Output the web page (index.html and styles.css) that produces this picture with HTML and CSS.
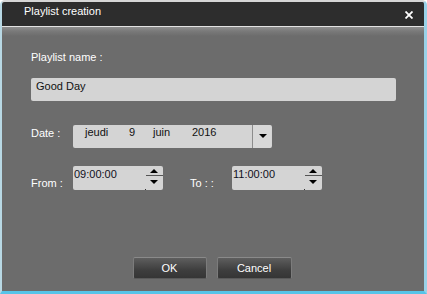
FILE: index.html
```html
<!DOCTYPE html>
<html>
<head>
<meta charset="utf-8">
<link rel="stylesheet" href="styles.css">
</head>
<body>
<div class="window">
  <div class="titlebar">
    <span class="title">Playlist creation</span>
    <svg class="close" width="8" height="8" viewBox="0 0 8 8"><path d="M0.5 0.5 L7.5 7.5 M7.5 0.5 L0.5 7.5" stroke="#fff" stroke-width="1.8" fill="none"/></svg>
  </div>
  <div class="content">
    <div class="label">Playlist name :</div>
    <div class="textbox">Good Day</div>
    <div class="row date-row">
      <div class="rowlabel">Date :</div>
      <div class="datebox">
        <div class="datetext"><span class="d-day">jeudi</span><span class="d-num">9</span><span class="d-month">juin</span><span>2016</span></div>
        <div class="dropbtn"><svg width="8" height="4" viewBox="0 0 8 4"><polygon points="0,0 8,0 4,4" fill="#000"/></svg></div>
      </div>
    </div>
    <div class="row time-row">
      <div class="rowlabel timelabel">From :</div>
      <div class="timebox">
        <div class="timetext">09:00:00</div>
        <svg class="spin" width="18" height="24" viewBox="0 0 18 24"><polygon points="5,7 13,7 9,3" fill="#000"/><line x1="1" y1="9.5" x2="18" y2="9.5" stroke="#555" stroke-width="1"/><polygon points="5,14 13,14 9,18" fill="#000"/><rect x="0" y="23" width="1" height="1" fill="#333"/></svg>
      </div>
      <div class="rowlabel timelabel tolabel">To : :</div>
      <div class="timebox">
        <div class="timetext">11:00:00</div>
        <svg class="spin" width="18" height="24" viewBox="0 0 18 24"><polygon points="5,7 13,7 9,3" fill="#000"/><line x1="1" y1="9.5" x2="18" y2="9.5" stroke="#555" stroke-width="1"/><polygon points="5,14 13,14 9,18" fill="#000"/><rect x="0" y="23" width="1" height="1" fill="#333"/></svg>
      </div>
    </div>
    <div class="buttons">
      <div class="btn">OK</div>
      <div class="btn btn-cancel">Cancel</div>
    </div>
  </div>
</div>
</body>
</html>
```
FILE: styles.css
```css
html, body {
  margin: 0;
  padding: 0;
  background: #ffffff;
}
body {
  width: 427px;
  height: 294px;
  overflow: hidden;
  font-family: "Liberation Sans", Arial, sans-serif;
  font-size: 11px;
}
.window {
  width: 427px;
  height: 294px;
  box-sizing: border-box;
  border-top: 2px solid #d6d6d6;
  border-left: 2px solid #b8d8e4;
  border-right: 3px solid #98d2e8;
  border-bottom: 3px solid #56c4e8;
  border-radius: 5px 5px 0 0;
  display: flex;
  flex-direction: column;
  background: #6c6c6c;
  overflow: hidden;
}
.titlebar {
  height: 24px;
  background: #2d2d2d;
  border-bottom: 1px solid #e2e2e2;
  display: flex;
  align-items: flex-start;
  justify-content: space-between;
  padding: 0 11px 0 22px;
  flex: none;
}
.title {
  color: #ffffff;
  line-height: 13px;
  padding-top: 3px;
  font-size: 11px;
}
.close {
  margin-top: 9px;
}
.content {
  flex: 1;
  display: flex;
  flex-direction: column;
  padding: 24px 0 0 29px;
  background: linear-gradient(#8e8e8e 0px, #7a7a7a 4px, #6c6c6c 9px);
}
.label {
  color: #ffffff;
  line-height: 13px;
  height: 13px;
}
.textbox {
  margin-top: 14px;
  width: 360px;
  height: 21px;
  padding: 2px 0 0 5px;
  line-height: 13px;
  background: #d4d4d4;
  border-radius: 2px;
  color: #111111;
}
.row {
  display: flex;
  align-items: flex-start;
}
.date-row {
  margin-top: 24px;
  height: 23px;
}
.rowlabel {
  width: 42px;
  color: #ffffff;
  line-height: 13px;
  margin-top: 2px;
}
.datebox {
  width: 199px;
  height: 23px;
  display: flex;
  background: #d4d4d4;
  border-radius: 2px;
}
.datetext {
  width: 167px;
  padding: 1px 0 0 12px;
  line-height: 13px;
  color: #111111;
  display: flex;
}
.d-day { width: 44px; }
.d-num { width: 24px; }
.d-month { width: 39px; }
.dropbtn {
  width: 19px;
  border-left: 1px solid #8c8c8c;
  background: #d8d8d8;
  border-radius: 0 2px 2px 0;
  display: flex;
  justify-content: center;
  padding-top: 9px;
  box-sizing: border-box;
}
.dropbtn svg {
  margin-left: 1px;
}
.time-row {
  margin-top: 18px;
  height: 24px;
}
.timelabel {
  margin-top: 11px;
}
.tolabel {
  margin-left: 27px;
}
.timebox {
  width: 90px;
  height: 24px;
  background: #d4d4d4;
  border-radius: 2px;
  display: flex;
  justify-content: space-between;
}
.timetext {
  padding: 2px 0 0 1px;
  line-height: 13px;
  color: #10101c;
}
.spin {
  display: block;
}
.buttons {
  margin-top: auto;
  margin-bottom: 12px;
  margin-left: -29px;
  display: flex;
  justify-content: center;
  gap: 10px;
  padding-right: 2px;
}
.btn {
  width: 72px;
  height: 20px;
  border: 1px solid #7c7c7c;
  border-top-color: #8a8a8a;
  border-bottom-color: #5a5a5a;
  border-radius: 2px;
  background: linear-gradient(#5e5e5e, #3e3e3e 60%, #353535);
  color: #ffffff;
  line-height: 20px;
  text-align: center;
}
.btn-cancel {
  width: 73px;
}
```
